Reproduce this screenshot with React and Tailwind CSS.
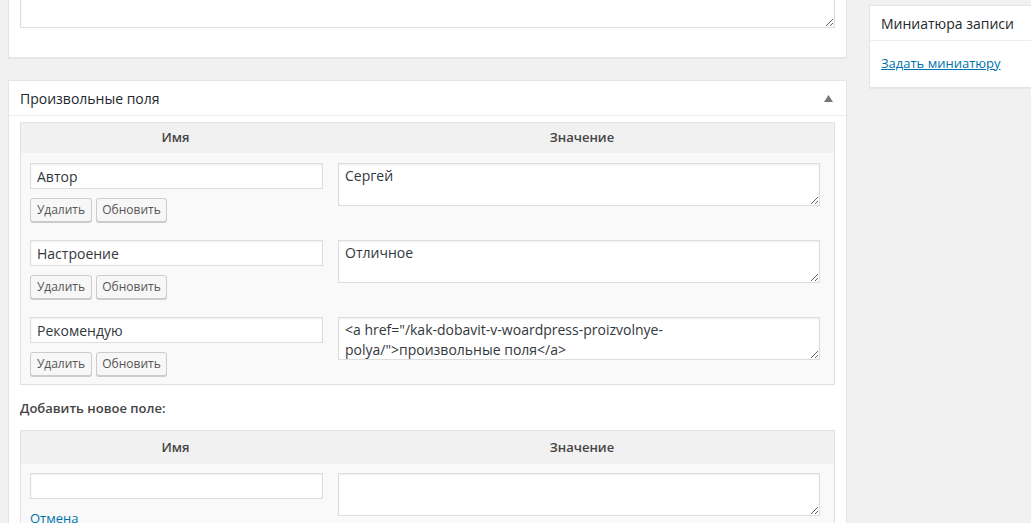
const font = { fontFamily: '"Open Sans", "Noto Sans", sans-serif' };

const Btn = ({ children, w }) => (
  <button
    type="button"
    className={`h-[24px] ${w} rounded-[3px] border border-[#cccccc] bg-[#f7f7f7] text-[12px] leading-[22px] text-[#555555] shadow-[0_1px_0_#cccccc]`}
  >
    {children}
  </button>
);

const NameInput = ({ value }) => (
  <input
    type="text"
    defaultValue={value}
    className="block h-[26px] w-[293px] border border-[#dddddd] bg-white px-[6px] text-[14px] text-[#32373c] shadow-[inset_0_1px_2px_rgba(0,0,0,0.07)] outline-none"
  />
);

const ValueArea = ({ value }) => (
  <textarea
    defaultValue={value}
    className="block h-[43px] w-[482px] border border-[#dddddd] bg-white px-[6px] py-[2px] text-[14px] leading-[1.4] text-[#32373c] shadow-[inset_0_1px_2px_rgba(0,0,0,0.07)] outline-none"
  />
);

const HeadRow = ({ h }) => (
  <div className={`grid grid-cols-[309px_1fr] ${h} items-center bg-[#f1f1f1] text-[13px] font-semibold text-[#444444]`}>
    <div className="text-center">Имя</div>
    <div className="text-center">Значение</div>
  </div>
);

const MetaRow = ({ name, value }) => (
  <div className="grid grid-cols-[309px_1fr]">
    <div className="pl-[9px]">
      <NameInput value={name} />
      <div className="mt-[9px] flex gap-[4px]">
        <Btn w="w-[62px]">Удалить</Btn>
        <Btn w="w-[71px]">Обновить</Btn>
      </div>
    </div>
    <div className="pl-[8px]">
      <ValueArea value={value} />
    </div>
  </div>
);

export default function App() {
  const rows = [
    { name: "Автор", value: "Сергей" },
    { name: "Настроение", value: "Отличное" },
    { name: "Рекомендую", value: '<a href="/kak-dobavit-v-woardpress-proizvolnye-\npolya/">произвольные поля</a>' },
  ];

  return (
    <div className="flex h-[523px] w-full gap-[22px] overflow-hidden bg-[#f1f1f1] pl-[8px] text-[13px] text-[#444444]" style={font}>
      {/* main column */}
      <div className="w-[839px] shrink-0">
        <div className="-mt-[40px] border border-[#e5e5e5] bg-white pb-[29px] pl-[11px] pr-[11px] pt-[6px] shadow-[0_1px_1px_rgba(0,0,0,0.04)]">
          <textarea className="block h-[61px] w-[815px] border border-[#dddddd] bg-white shadow-[inset_0_1px_2px_rgba(0,0,0,0.07)] outline-none" />
        </div>

        <div className="mt-[22px] border border-[#e5e5e5] bg-white shadow-[0_1px_1px_rgba(0,0,0,0.04)]">
          <div className="flex h-[35px] items-center justify-between border-b border-[#eeeeee] pl-[11px] pr-[13px]">
            <span className="text-[14px] text-[#23282d]">Произвольные поля</span>
            <svg width="9" height="7" viewBox="0 0 9 7">
              <path d="M4.5 0 L9 7 L0 7 Z" fill="#72777c" />
            </svg>
          </div>

          <div className="pl-[11px] pr-[11px] pt-[6px]">
            <div className="w-[815px] border border-[#e1e1e1] bg-[#f9f9f9]">
              <HeadRow h="h-[30px]" />
              <div className="flex flex-col gap-[18px] pb-[8px] pt-[10px]">
                {rows.map((r) => (
                  <MetaRow key={r.name} name={r.name} value={r.value} />
                ))}
              </div>
            </div>

            <div className="pb-[13px] pt-[14px] text-[13px] font-semibold leading-[18px] text-[#444444]">
              Добавить новое поле:
            </div>

            <div className="w-[815px] border border-[#e1e1e1] bg-[#f9f9f9]">
              <HeadRow h="h-[33px]" />
              <div className="grid grid-cols-[309px_1fr] pt-[9px] pb-[20px]">
                <div className="pl-[9px]">
                  <NameInput value="" />
                  <a href="#" className="mt-[10px] block text-[13px] text-[#0073aa]">Отмена</a>
                </div>
                <div className="pl-[8px]">
                  <ValueArea value="" />
                </div>
              </div>
            </div>
          </div>
        </div>
      </div>

      {/* sidebar */}
      <div className="w-[280px] shrink-0 pt-[5px]">
        <div className="border border-[#e5e5e5] bg-white shadow-[0_1px_1px_rgba(0,0,0,0.04)]">
          <div className="flex h-[35px] items-center border-b border-[#eeeeee] pl-[11px] text-[14px] text-[#23282d]">
            Миниатюра записи
          </div>
          <div className="pb-[13px] pl-[11px] pt-[12px]">
            <a href="#" className="text-[13px] leading-[20px] text-[#0073aa] underline">Задать миниатюру</a>
          </div>
        </div>
      </div>
    </div>
  );
}
